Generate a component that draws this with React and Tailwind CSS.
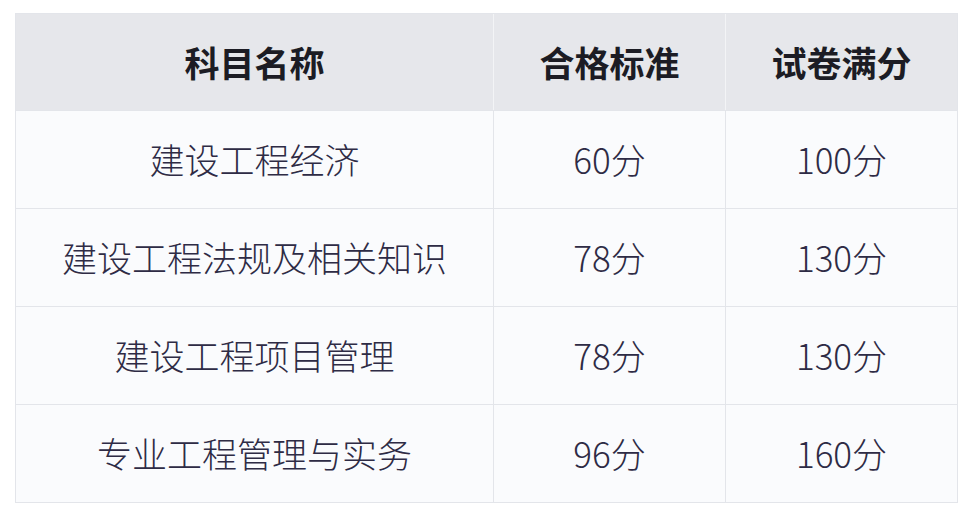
import React from 'react';

const rows = [
    ['建设工程经济', '60分', '100分'],
    ['建设工程法规及相关知识', '78分', '130分'],
    ['建设工程项目管理', '78分', '130分'],
    ['专业工程管理与实务', '96分', '160分'],
];

const font = { fontFamily: '"Noto Sans CJK SC", "Noto Sans", sans-serif' };

const App = () => {
    return (
        <div className="w-[966px] h-[518px] bg-white pt-[13px] pl-[15px]" style={font}>
            <div className="w-[943px] border border-[#e3e5ea] bg-[#fafbfd] grid grid-cols-[477px_232px_232px]">
                {/* header */}
                {['科目名称', '合格标准', '试卷满分'].map((h, i) => (
                    <div
                        key={h}
                        className={`h-[96px] bg-[#e6e7eb] flex items-center justify-center text-[35px] font-bold text-[#1c1c24] ${i > 0 ? 'border-l border-[#f3f4f6]' : ''}`}
                    >
                        {h}
                    </div>
                ))}
                {rows.map((r) =>
                    r.map((c, i) => (
                        <div
                            key={r[0] + i}
                            className={`h-[98px] flex items-center justify-center text-[35px] font-light text-[#2e2b45] border-t border-[#e3e5ea] ${i > 0 ? 'border-l' : ''}`}
                        >
                            {c}
                        </div>
                    ))
                )}
            </div>
        </div>
    );
};

export default App;
